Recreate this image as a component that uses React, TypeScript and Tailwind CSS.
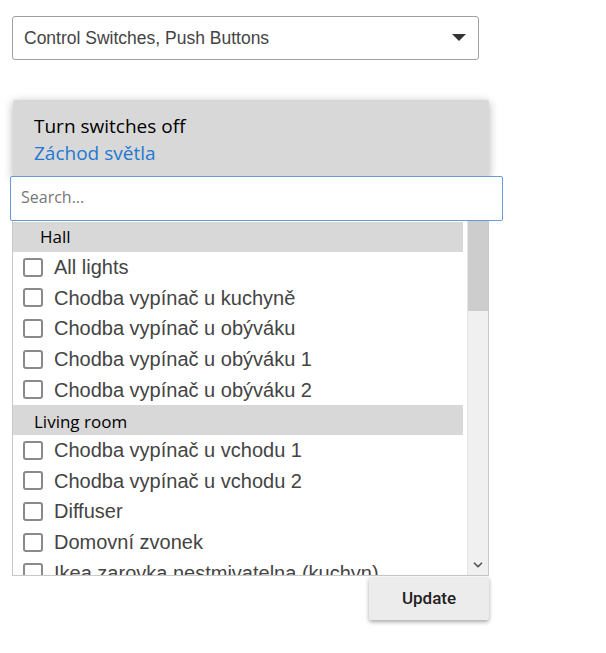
import { ChevronDown } from "lucide-react";

const hall = [
  "All lights",
  "Chodba vypínač u kuchyně",
  "Chodba vypínač u obýváku",
  "Chodba vypínač u obýváku 1",
  "Chodba vypínač u obýváku 2",
];

const living = [
  "Chodba vypínač u vchodu 1",
  "Chodba vypínač u vchodu 2",
  "Diffuser",
  "Domovní zvonek",
  "Ikea zarovka nestmivatelna (kuchyn)",
];

function GroupHeader({ label, wide }: { label: string; wide?: boolean }) {
  return (
    <div
      className={
        wide
          ? "h-[30px] w-[452px] -ml-[2px] shrink-0 bg-[#d8d8d8] pl-[23px] pt-[4px] flex items-center text-[17px] text-black [font-family:'Open_Sans',sans-serif]"
          : "h-[30px] w-[450px] shrink-0 bg-[#d8d8d8] pl-[27px] flex items-center text-[17px] text-black [font-family:'Open_Sans',sans-serif]"
      }
    >
      {label}
    </div>
  );
}

function Item({ label }: { label: string }) {
  return (
    <label className="h-[30.6px] shrink-0 flex items-center gap-[11px] pl-[10px] text-[20px] text-[#444] [font-family:'Liberation_Sans',Arial,sans-serif]">
      <span className="w-[20px] h-[19px] border-2 border-[#8a8a8a] rounded-[3px] bg-white shrink-0" />
      <span className="whitespace-nowrap">{label}</span>
    </label>
  );
}

export default function App() {
  return (
    <div className="min-h-screen bg-white pt-[16px] pl-[12px]">
      {/* dropdown */}
      <div className="w-[467px] h-[44px] border border-[#a0a0a0] rounded-[3px] flex items-center justify-between pl-[11px] pr-[12px] bg-white">
        <span className="text-[17.5px] text-[#444] [font-family:'Liberation_Sans',Arial,sans-serif]">
          Control Switches, Push Buttons
        </span>
        <svg width="14" height="8" viewBox="0 0 14 8">
          <path d="M0 0 L14 0 L7 7 Z" fill="#333" />
        </svg>
      </div>

      <div className="mt-[40px] w-[477px] flex flex-col">
        {/* header */}
        <div className="ml-[1px] h-[77px] bg-[#d8d8d8] shadow-[0_2px_10px_rgba(0,0,0,0.3)] rounded-t-[2px] pl-[21px] pt-[12px] [font-family:'Open_Sans',sans-serif]">
          <div className="text-[19px] leading-[28px] text-black">Turn switches off</div>
          <div className="text-[19px] leading-[26px] text-[#1f78d1]">Záchod světla</div>
        </div>

        {/* search */}
        <input
          placeholder="Search..."
          className="relative -ml-[2px] -mt-[1px] w-[493px] h-[45px] border border-[#6b98dc] rounded-[2px] bg-white px-[10px] pb-[4px] text-[16px] outline-none placeholder:text-[#777] [font-family:'Open_Sans',sans-serif]"
        />

        {/* list */}
        <div className="h-[355px] flex border-l border-b border-r border-[#c8c8c8] overflow-hidden">
          <div className="flex-1 flex flex-col pt-[1px]">
            <GroupHeader label="Hall" />
            {hall.map((h) => (
              <Item key={h} label={h} />
            ))}
            <GroupHeader label="Living room" wide />
            {living.map((h) => (
              <Item key={h} label={h} />
            ))}
          </div>
          <div className="w-[21px] bg-[#f0f0f0] border-l border-[#e4e4e4] flex flex-col justify-between">
            <div className="h-[90px] bg-[#cdcdcd]" />
            <div className="h-[20px] flex items-center justify-center">
              <ChevronDown size={14} strokeWidth={3} color="#555" />
            </div>
          </div>
        </div>

        {/* button */}
        <div className="flex justify-end mt-[1px]">
          <button className="w-[120px] h-[43px] bg-[#ececec] shadow-[0_2px_4px_rgba(0,0,0,0.35)] rounded-[2px] text-[17px] font-medium text-[#222] [font-family:Roboto,sans-serif]">
            Update
          </button>
        </div>
      </div>
    </div>
  );
}
